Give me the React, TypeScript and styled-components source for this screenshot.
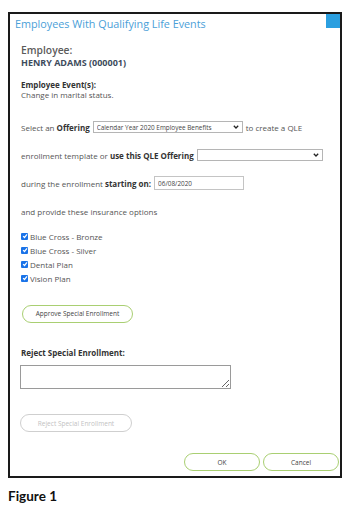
import styled, { createGlobalStyle } from "styled-components";

const GlobalStyle = createGlobalStyle`
  html, body {
    margin: 0;
    padding: 0;
    background: #ffffff;
  }
  body {
    font-family: "Open Sans", "Liberation Sans", sans-serif;
    color: #555;
  }
`;

const Page = styled.div`
  width: 356px;
  height: 515px;
  padding: 12px 0 0 8px;
  box-sizing: border-box;
`;

const Dialog = styled.div`
  position: relative;
  width: 334px;
  height: 466px;
  box-sizing: border-box;
  border: 2px solid #1a1a1a;
  display: flex;
  flex-direction: column;
`;

const Corner = styled.span`
  position: absolute;
  top: 0;
  right: 0;
  width: 14px;
  height: 14px;
  background: #2b9fe0;
`;

const Title = styled.h1`
  margin: 2px 0 0 5px;
  font-size: 10.8px;
  line-height: 16px;
  font-weight: 400;
  color: #4aa0d8;
  white-space: nowrap;
`;

const Body = styled.div`
  flex: 1;
  display: flex;
  flex-direction: column;
  padding: 0 0 0 11px;
`;

const EmployeeLabel = styled.div`
  margin-top: 11px;
  font-size: 10.3px;
  line-height: 14px;
  font-weight: 600;
  color: #5b5b5b;
`;

const EmployeeName = styled.div`
  font-size: 9px;
  line-height: 12.5px;
  font-weight: 700;
  color: #3d4b5c;
`;

const Label = styled.div<{ $top: number }>`
  margin-top: ${(p) => p.$top}px;
  font-size: 8px;
  line-height: 10px;
  font-weight: 700;
  color: #333;
`;

const Text = styled.div`
  font-size: 8px;
  line-height: 10px;
  color: #555;
`;

const Row = styled.div<{ $top: number }>`
  display: flex;
  align-items: center;
  height: 14px;
  margin-top: ${(p) => p.$top}px;
  font-size: 8px;
  color: #555;
  white-space: nowrap;

  b {
    font-weight: 700;
    color: #333;
    margin-left: 2px;
  }
`;

const SelectWrap = styled.span<{ $width: number }>`
  position: relative;
  display: inline-flex;
  width: ${(p) => p.$width}px;
  height: 12px;
  margin: 0 3px;

  svg {
    position: absolute;
    right: 4px;
    top: 4px;
    pointer-events: none;
  }
`;

const Select = styled.select`
  appearance: none;
  width: 100%;
  height: 100%;
  box-sizing: border-box;
  border: 1px solid #b5b5b5;
  border-radius: 0;
  background: #fff;
  padding: 0 12px 0 3px;
  font-family: "Open Sans", "Liberation Sans", sans-serif;
  font-size: 6.4px;
  color: #444;
  outline: none;
`;

const DateInput = styled.input`
  width: 90px;
  height: 14px;
  box-sizing: border-box;
  margin-left: 3px;
  border: 1px solid #c4c4c4;
  padding: 0 3px;
  font-family: "Open Sans", "Liberation Sans", sans-serif;
  font-size: 6.4px;
  color: #444;
  outline: none;
`;

const Checks = styled.div`
  margin-top: 11px;
  display: flex;
  flex-direction: column;
`;

const CheckRow = styled.label`
  display: flex;
  align-items: center;
  height: 14px;
  font-size: 8px;
  color: #555;
`;

const Box = styled.span`
  display: inline-flex;
  align-items: center;
  justify-content: center;
  width: 7px;
  height: 7px;
  margin: 0 2px 0 0;
  border-radius: 1px;
  background: #1a73e8;
`;

const Pill = styled.button<{ $width: number; $disabled?: boolean }>`
  width: ${(p) => p.$width}px;
  height: 18px;
  box-sizing: border-box;
  border-radius: 9px;
  border: 1.5px solid ${(p) => (p.$disabled ? "#cfcfcf" : "#a9cf72")};
  background: #fff;
  font-family: "Open Sans", "Liberation Sans", sans-serif;
  font-size: 6.5px;
  color: ${(p) => (p.$disabled ? "#c2c2c2" : "#444")};
  padding: 0;
  cursor: pointer;
`;

const ApproveWrap = styled.div`
  margin-top: 14px;
  padding-left: 1px;
`;

const TextArea = styled.textarea`
  display: block;
  width: 211px;
  height: 24px;
  box-sizing: border-box;
  margin: 7px 0 0 -1px;
  border: 1px solid #9a9a9a;
  resize: both;
  font-family: "Open Sans", "Liberation Sans", sans-serif;
  font-size: 8px;
`;

const RejectWrap = styled.div`
  margin-top: 20px;
  margin-left: -1px;
`;

const Footer = styled.div`
  margin-top: auto;
  display: flex;
  justify-content: flex-end;
  gap: 3px;
  padding: 0 1px 5px 0;
`;

const Caption = styled.div`
  margin-top: 10px;
  font-family: Lato, "Open Sans", sans-serif;
  font-size: 13.5px;
  font-weight: 700;
  color: #111;
  line-height: 16px;
`;

const Chevron = () => (
  <svg width="6" height="4" viewBox="0 0 6 4">
    <path d="M0.8 0.8 L3 3 L5.2 0.8" fill="none" stroke="#222" strokeWidth="1.3" />
  </svg>
);

const Tick = () => (
  <svg width="6" height="6" viewBox="0 0 6 6">
    <path d="M1.1 3.1 L2.5 4.5 L5 1.4" fill="none" stroke="#fff" strokeWidth="1.2" />
  </svg>
);

const plans = ["Blue Cross - Bronze", "Blue Cross - Silver", "Dental Plan", "Vision Plan"];

export default function App() {
  return (
    <>
      <GlobalStyle />
      <Page>
        <Dialog>
          <Corner />
          <Title>Employees With Qualifying Life Events</Title>
          <Body>
            <EmployeeLabel>Employee:</EmployeeLabel>
            <EmployeeName>HENRY ADAMS (000001)</EmployeeName>
            <Label $top={10.5}>Employee Event(s):</Label>
            <Text>Change in marital status.</Text>

            <Row $top={20}>
              Select an <b>Offering</b>
              <SelectWrap $width={150}>
                <Select defaultValue="cy2020">
                  <option value="cy2020">Calendar Year 2020 Employee Benefits</option>
                </Select>
                <Chevron />
              </SelectWrap>
              to create a QLE
            </Row>
            <Row $top={14}>
              enrollment template or <b>use this QLE Offering</b>
              <SelectWrap $width={126}>
                <Select defaultValue="">
                  <option value=""></option>
                </Select>
                <Chevron />
              </SelectWrap>
            </Row>
            <Row $top={14}>
              during the enrollment <b>starting on:</b>
              <DateInput defaultValue="06/08/2020" />
            </Row>
            <Row $top={14}>and provide these insurance options</Row>

            <Checks>
              {plans.map((plan) => (
                <CheckRow key={plan}>
                  <Box>
                    <Tick />
                  </Box>
                  {plan}
                </CheckRow>
              ))}
            </Checks>

            <ApproveWrap>
              <Pill $width={111}>Approve Special Enrollment</Pill>
            </ApproveWrap>

            <Label $top={25}>Reject Special Enrollment:</Label>
            <TextArea />

            <RejectWrap>
              <Pill $width={112} $disabled>
                Reject Special Enrollment
              </Pill>
            </RejectWrap>

            <Footer>
              <Pill $width={76}>OK</Pill>
              <Pill $width={76}>Cancel</Pill>
            </Footer>
          </Body>
        </Dialog>
        <Caption>Figure 1</Caption>
      </Page>
    </>
  );
}
